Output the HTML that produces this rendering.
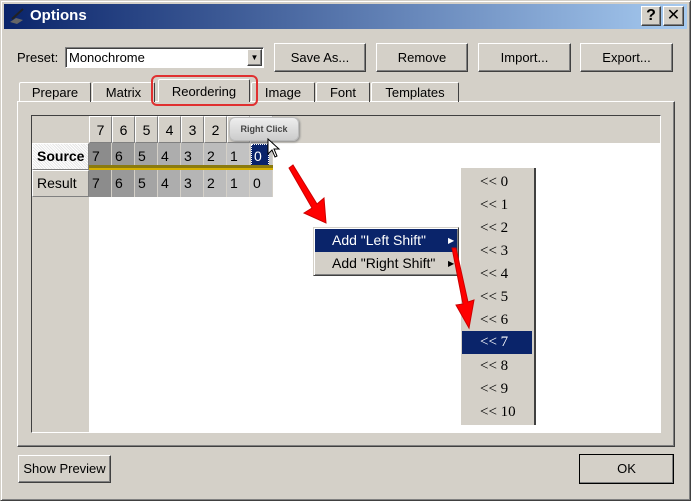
<!DOCTYPE html><html><head><style>
*{margin:0;padding:0;box-sizing:border-box}
body{width:691px;height:501px;background:#d4d0c8;position:relative;overflow:hidden;font-family:"Liberation Sans",sans-serif;font-size:13px;color:#000}
.a{position:absolute}
.btn{position:absolute;background:#d4d0c8;border:1px solid;border-color:#fff #404040 #404040 #fff;box-shadow:inset -1px -1px #808080;text-align:center;font-size:13px}
.tab{position:absolute;top:82px;height:20px;border:1px solid;border-bottom:none;border-color:#fff #404040 #404040 #fff;text-align:center;line-height:19px;font-size:13px;border-radius:2px 2px 0 0}
.hc{position:absolute;top:116px;height:27px;width:23px;border:1px solid;border-color:#fff #808080 #808080 #fff;text-align:center;line-height:27px;font-size:14px;background:#d4d0c8}
.c{position:absolute;height:27px;width:23px;border-right:1px solid #d4d0c8;font-size:14px;line-height:27px;padding-left:3px}
.mi{position:absolute;left:462px;width:70px;height:23px;line-height:23px;padding-left:18px;font-family:"Liberation Serif",serif;font-size:15px}
</style></head><body>
<div class="a" style="left:0;top:0;width:691px;height:501px;border:1px solid;border-color:#d4d0c8 #404040 #404040 #d4d0c8;box-shadow:inset 1px 1px #fff,inset -1px -1px #808080"></div>
<div class="a" style="left:4px;top:4px;width:683px;height:25px;background:linear-gradient(90deg,#0a246a,#a6caf0)"></div>
<svg class="a" style="left:8px;top:7px" width="18" height="18"><path d="M2 15 L8 11 L15 13 L9 17Z" fill="#666"/><path d="M4 12 L15 2" stroke="#222" stroke-width="2"/></svg>
<div class="a" style="left:30px;top:7px;color:#fff;font-weight:bold;font-size:15px">Options</div>
<div class="btn" style="left:641px;top:6px;width:20px;height:20px;font-weight:bold;font-size:16px;line-height:17px">?</div>
<div class="btn" style="left:663px;top:6px;width:21px;height:20px;font-size:16px;line-height:17px">✕</div>
<div class="a" style="left:17px;top:50px;font-size:13px">Preset:</div>
<div class="a" style="left:65px;top:47px;width:199px;height:21px;background:#fff;border:1px solid;border-color:#808080 #fff #fff #808080;box-shadow:inset 1px 1px #404040;padding:2px 3px;font-size:13px">Monochrome</div>
<div class="btn" style="left:247px;top:49px;width:15px;height:17px;font-size:8px;line-height:15px">▼</div>
<div class="btn" style="left:274px;top:43px;width:92px;height:29px;line-height:27px">Save As...</div>
<div class="btn" style="left:376px;top:43px;width:92px;height:29px;line-height:27px">Remove</div>
<div class="btn" style="left:478px;top:43px;width:93px;height:29px;line-height:27px">Import...</div>
<div class="btn" style="left:580px;top:43px;width:93px;height:29px;line-height:27px">Export...</div>
<div class="a" style="left:17px;top:101px;width:658px;height:346px;border:1px solid;border-color:#fff #404040 #404040 #fff;box-shadow:inset -1px -1px #808080"></div>
<div class="tab" style="left:19px;width:72px">Prepare</div>
<div class="tab" style="left:92px;width:63px">Matrix</div>
<div class="tab" style="left:158px;top:79px;width:92px;height:23px;background:#d4d0c8;line-height:24px">Reordering</div>
<div class="tab" style="left:251px;width:64px">Image</div>
<div class="tab" style="left:316px;width:54px">Font</div>
<div class="tab" style="left:371px;width:88px">Templates</div>
<div class="a" style="left:151px;top:75px;width:107px;height:31px;border:2px solid #e03030;border-radius:6px"></div>
<div class="a" style="left:31px;top:115px;width:630px;height:318px;border:1px solid;border-color:#404040 #fff #fff #404040;background:#fff"></div>
<div class="a" style="left:32px;top:116px;width:628px;height:27px;background:#d4d0c8"></div>
<div class="a" style="left:32px;top:116px;width:57px;height:316px;background:#d4d0c8"></div>
<div class="hc" style="left:89px">7</div><div class="hc" style="left:112px">6</div><div class="hc" style="left:135px">5</div><div class="hc" style="left:158px">4</div><div class="hc" style="left:181px">3</div><div class="hc" style="left:204px">2</div><div class="hc" style="left:227px">1</div><div class="hc" style="left:250px">0</div>
<div class="a" style="left:32px;top:143px;width:57px;height:27px;border:1px solid;border-color:#fff #808080 #808080 #fff;background:repeating-linear-gradient(45deg,#fff 0 1px,#e6e6e6 1px 2px);font-weight:bold;font-size:14px;line-height:25px;padding-left:4px">Source</div>
<div class="a" style="left:32px;top:170px;width:57px;height:27px;border:1px solid;border-color:#fff #808080 #808080 #fff;font-size:14px;line-height:25px;padding-left:4px">Result</div>
<div class="c a" style="left:89px;top:143px;background:#8c8c8c">7</div><div class="c a" style="left:112px;top:143px;background:#999">6</div><div class="c a" style="left:135px;top:143px;background:#a4a4a4">5</div><div class="c a" style="left:158px;top:143px;background:#adadad">4</div><div class="c a" style="left:181px;top:143px;background:#b5b5b5">3</div><div class="c a" style="left:204px;top:143px;background:#bcbcbc">2</div><div class="c a" style="left:227px;top:143px;background:#c2c2c2">1</div><div class="c a" style="left:250px;top:143px;background:#c6c6c6"></div>
<div class="a" style="left:251px;top:144px;width:18px;height:22px;background:#0a246a;color:#fff;font-size:14px;line-height:24px;padding-left:3px;outline:1px dotted #fff;outline-offset:-1px">0</div>
<div class="a" style="left:89px;top:165px;width:184px;height:3px;background:#8a7a10"></div>
<div class="a" style="left:89px;top:168px;width:184px;height:2px;background:#d4b000"></div>
<div class="c a" style="left:89px;top:170px;background:#8c8c8c">7</div><div class="c a" style="left:112px;top:170px;background:#999">6</div><div class="c a" style="left:135px;top:170px;background:#a4a4a4">5</div><div class="c a" style="left:158px;top:170px;background:#adadad">4</div><div class="c a" style="left:181px;top:170px;background:#b5b5b5">3</div><div class="c a" style="left:204px;top:170px;background:#bcbcbc">2</div><div class="c a" style="left:227px;top:170px;background:#c2c2c2">1</div><div class="c a" style="left:250px;top:170px;background:#c6c6c6">0</div>
<div class="a" style="left:229px;top:117px;width:70px;height:24px;background:linear-gradient(#eee,#ccc);border:1px solid #bbb;border-radius:6px;box-shadow:1px 1px 2px #888;font-size:9px;font-weight:bold;color:#444;text-align:center;line-height:22px">Right Click</div>
<svg class="a" style="left:266px;top:138px" width="16" height="22"><path d="M2 1 L2 16 L6 12 L9 19 L11 18 L8 11 L13 11Z" fill="#fff" stroke="#000"/></svg>
<div class="a" style="left:313px;top:227px;width:146px;height:49px;background:#d4d0c8;border:1px solid;border-color:#d4d0c8 #404040 #404040 #d4d0c8;box-shadow:inset 1px 1px #fff,inset -1px -1px #808080"></div>
<div class="a" style="left:315px;top:229px;width:142px;height:23px;background:#0a246a;color:#fff;font-size:14px;line-height:23px;padding-left:17px">Add "Left Shift"<span style="position:absolute;left:133px;font-size:8px">▶</span></div>
<div class="a" style="left:315px;top:252px;width:142px;height:23px;font-size:14px;line-height:23px;padding-left:17px">Add "Right Shift"<span style="position:absolute;left:133px;font-size:8px">▶</span></div>
<div class="a" style="left:460px;top:168px;width:76px;height:257px;background:#d4d0c8;border-left:1px solid #fff;border-right:2px solid #404040"></div>
<div class="mi" style="top:171px">&lt;&lt; 0</div><div class="mi" style="top:194px">&lt;&lt; 1</div><div class="mi" style="top:217px">&lt;&lt; 2</div><div class="mi" style="top:240px">&lt;&lt; 3</div><div class="mi" style="top:263px">&lt;&lt; 4</div><div class="mi" style="top:286px">&lt;&lt; 5</div><div class="mi" style="top:309px">&lt;&lt; 6</div>
<div class="mi" style="top:331px;background:#0a246a;color:#fff">&lt;&lt; 7</div>
<div class="mi" style="top:355px">&lt;&lt; 8</div><div class="mi" style="top:378px">&lt;&lt; 9</div><div class="mi" style="top:401px">&lt;&lt; 10</div>
<svg class="a" style="left:280px;top:160px;z-index:5" width="200" height="180">
<path d="M9 8 L13 5 L37 44 L44 38 L46 63 L24 53 L32 48 Z" fill="#f00" stroke="#c00"/>
<path d="M172 88 L176 88 L188 142 L194 140 L189 168 L176 145 L183 144 Z" fill="#f00" stroke="#c00"/>
</svg>
<div class="btn" style="left:18px;top:455px;width:93px;height:28px;line-height:26px;font-size:13px">Show Preview</div>
<div class="btn" style="left:579px;top:454px;width:95px;height:30px;line-height:28px;border:1px solid #000">OK</div>
</body></html>
